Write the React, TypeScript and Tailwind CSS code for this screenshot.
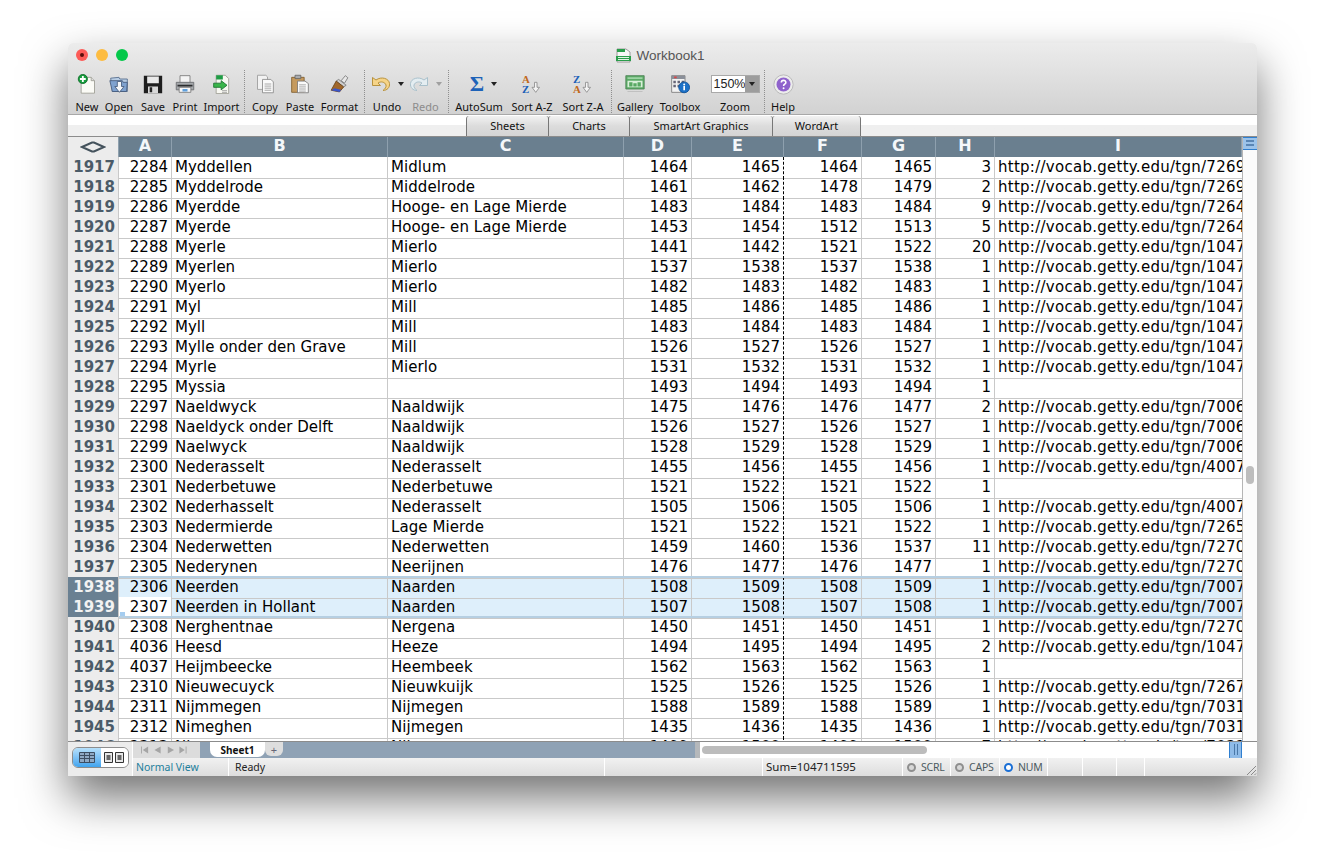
const ROWS = `1917|2284|Myddellen|Midlum|1464|1465|1464|1465|3|7269
1918|2285|Myddelrode|Middelrode|1461|1462|1478|1479|2|7269
1919|2286|Myerdde|Hooge- en Lage Mierde|1483|1484|1483|1484|9|7264
1920|2287|Myerde|Hooge- en Lage Mierde|1453|1454|1512|1513|5|7264
1921|2288|Myerle|Mierlo|1441|1442|1521|1522|20|1047
1922|2289|Myerlen|Mierlo|1537|1538|1537|1538|1|1047
1923|2290|Myerlo|Mierlo|1482|1483|1482|1483|1|1047
1924|2291|Myl|Mill|1485|1486|1485|1486|1|1047
1925|2292|Myll|Mill|1483|1484|1483|1484|1|1047
1926|2293|Mylle onder den Grave|Mill|1526|1527|1526|1527|1|1047
1927|2294|Myrle|Mierlo|1531|1532|1531|1532|1|1047
1928|2295|Myssia||1493|1494|1493|1494|1|
1929|2297|Naeldwyck|Naaldwijk|1475|1476|1476|1477|2|7006
1930|2298|Naeldyck onder Delft|Naaldwijk|1526|1527|1526|1527|1|7006
1931|2299|Naelwyck|Naaldwijk|1528|1529|1528|1529|1|7006
1932|2300|Nederasselt|Nederasselt|1455|1456|1455|1456|1|4007
1933|2301|Nederbetuwe|Nederbetuwe|1521|1522|1521|1522|1|
1934|2302|Nederhasselt|Nederasselt|1505|1506|1505|1506|1|4007
1935|2303|Nedermierde|Lage Mierde|1521|1522|1521|1522|1|7265
1936|2304|Nederwetten|Nederwetten|1459|1460|1536|1537|11|7270
1937|2305|Nederynen|Neerijnen|1476|1477|1476|1477|1|7270
1938|2306|Neerden|Naarden|1508|1509|1508|1509|1|7007
1939|2307|Neerden in Hollant|Naarden|1507|1508|1507|1508|1|7007
1940|2308|Nerghentnae|Nergena|1450|1451|1450|1451|1|7270
1941|4036|Heesd|Heeze|1494|1495|1494|1495|2|1047
1942|4037|Heijmbeecke|Heembeek|1562|1563|1562|1563|1|
1943|2310|Nieuwecuyck|Nieuwkuijk|1525|1526|1525|1526|1|7267
1944|2311|Nijmmegen|Nijmegen|1588|1589|1588|1589|1|7031
1945|2312|Nimeghen|Nijmegen|1435|1436|1435|1436|1|7031
1946|2313|Nimmegen|Nijmegen|1499|1500|1499|1500|7|7031`
  .split("\n")
  .map((r) => r.split("|"));

const GRID = "grid grid-cols-[51px_53px_216px_236px_68px_92px_78px_74px_59px_247px]";

function Row({ cells }: { cells: string[] }) {
  const [num, id, name, place, d, e, f, g, h, tgn] = cells;
  const selected = num === "1938" || num === "1939";
  const active = num === "1939";
  const rowBg = selected ? "bg-[#deeffb]" : "bg-white";
  const numCls = "overflow-hidden border-r border-b border-[#c9c9c9] pr-[3px] text-right";
  return (
    <div className={`${GRID} h-[20px] leading-[21px] text-[15px] text-black ${rowBg}`}>
      <div
        className={
          selected
            ? "border-r border-b border-[#c9c9c9] bg-[#6a8092] pr-[3px] text-right font-bold text-[#f2f2f2]"
            : "border-r border-b border-[#c9c9c9] bg-[#ececec] pr-[3px] text-right font-bold text-[#4b5b68]"
        }
      >
        {num}
      </div>
      <div className={`${numCls} ${active ? "bg-white" : ""}`}>{id}</div>
      <div className="overflow-hidden whitespace-nowrap border-r border-b border-[#c9c9c9] pl-[3px]">{name}</div>
      <div className="overflow-hidden whitespace-nowrap border-r border-b border-[#c9c9c9] pl-[3px] tracking-[0.08px]">{place}</div>
      <div className={numCls}>{d}</div>
      <div className="overflow-hidden border-r border-b border-b-[#c9c9c9] border-r-black pr-[3px] text-right [border-right-style:dashed]">{e}</div>
      <div className={numCls}>{f}</div>
      <div className={numCls}>{g}</div>
      <div className={numCls}>{h}</div>
      <div className="overflow-hidden whitespace-nowrap border-b border-[#c9c9c9] pl-[3px] tracking-[0.27px]">
        {tgn ? `http://vocab.getty.edu/tgn/${tgn}000` : ""}
      </div>
    </div>
  );
}

function NewIcon() {
  return (
    <svg width="20" height="20" viewBox="0 0 24 24">
      <path d="M5 4h12l4 4v15H5z" fill="#fbfbf6" stroke="#9a9a90" />
      <path d="M17 4v4h4" fill="#ddd" stroke="#9a9a90" />
      <circle cx="7" cy="6" r="5.500" fill="#169c3c" stroke="#0c6a28" />
      <path d="M7 2.500v7M3.500 6h7" stroke="#fff" strokeWidth="2.200" />
    </svg>
  );
}
function OpenIcon() {
  return (
    <svg width="20" height="20" viewBox="0 0 24 24">
      <path d="M2 5l10-1 1 2h9v15H4z" fill="#b8cde4" stroke="#50698a" />
      <path d="M1 8h15l1 2h5l-1 11H4z" fill="#7fa2cf" stroke="#44597a" />
      <path d="M10 9h5v6h3l-5.500 7-5.500-7h3z" fill="#f4f6f8" stroke="#44597a" />
    </svg>
  );
}
function SaveIcon() {
  return (
    <svg width="20" height="20" viewBox="0 0 24 24">
      <path d="M1 2h22v21H1z" fill="#1e1e1e" />
      <path d="M5 3h14v8H5z" fill="#e9e9e9" />
      <path d="M6 15h12v8H6z" fill="#d8d8d8" />
      <path d="M8 16h3v6H8z" fill="#222" />
    </svg>
  );
}
function PrintIcon() {
  return (
    <svg width="20" height="20" viewBox="0 0 24 24">
      <path d="M6 2h12v10H6z" fill="#f4f4f4" stroke="#777" />
      <path d="M1.500 10h21v9h-21z" fill="#a6a9ac" stroke="#66696c" />
      <path d="M3 13h18v2H3z" fill="#2b2d2f" />
      <path d="M5 16h14v6H5z" fill="#f7f7f7" stroke="#777" />
      <path d="M9 18h6v3H9z" fill="#5fa0dd" />
    </svg>
  );
}
function ImportIcon() {
  return (
    <svg width="20" height="20" viewBox="0 0 24 24">
      <path d="M5 1.500h11l4 4v18H5z" fill="#f8f8f2" stroke="#9a9a90" />
      <path d="M5 1.500h8v5H5z" fill="#1f9c45" />
      <path d="M2 11h9V8l7 5.500-7 5.500v-3H2z" fill="#3ab54a" stroke="#17702c" />
      <path d="M12 20h6M12 22h6" stroke="#999" />
    </svg>
  );
}
function CopyIcon() {
  return (
    <svg width="20" height="20" viewBox="0 0 24 24">
      <path d="M3 1.500h10l2 2v15H3z" fill="#f2f2f2" stroke="#999" />
      <path d="M9 6.500h10l3 3v13H9z" fill="#fafafa" stroke="#888" />
      <path d="M11.500 12h8M11.500 14.500h8M11.500 17h8M11.500 19.500h8" stroke="#999" />
    </svg>
  );
}
function PasteIcon() {
  return (
    <svg width="20" height="20" viewBox="0 0 24 24">
      <path d="M2 4h15v18H2z" fill="#c59a5e" stroke="#7d5a2a" />
      <path d="M6 1.500h7v4H6z" fill="#a9abae" stroke="#666" />
      <path d="M9 8.500h9l4 3v11H9z" fill="#fafafa" stroke="#777" />
      <path d="M11 13h8M11 15.500h8M11 18h8M11 20.500h8" stroke="#999" />
    </svg>
  );
}
function FormatIcon() {
  return (
    <svg width="21" height="20" viewBox="0 0 24 24">
      <path d="M14 8l5-6 3 2.500-4 6.500z" fill="#e8e8e8" stroke="#777" />
      <path d="M11 6.500l9 7-3 2-9-7z" fill="#cfcfcf" stroke="#777" />
      <path d="M8 8.500l9 7-5 6-10-2z" fill="#a0672b" stroke="#6a4218" />
      <path d="M2 19.500l10 2 2-2.500-8-2z" fill="#3a55c8" />
    </svg>
  );
}
function UndoIcon({ redo }: { redo?: boolean }) {
  const body = redo ? "#e4edf1" : "#f6d488";
  const line = redo ? "#a9c0cb" : "#b8933f";
  return (
    <svg width="20" height="16" viewBox="0 0 20 16" className={redo ? "-scale-x-100" : ""}>
      <path d="M1.500 1.500v8h8L7 7c3-2 7-1 8 2 .5 2-1 4-3 5.500 4 0 7-3 6.500-7C18 2.500 10.500 0 5 4z" fill={body} stroke={line} />
    </svg>
  );
}
function GalleryIcon() {
  return (
    <svg width="20" height="20" viewBox="0 0 24 24">
      <path d="M1 2h22v16H1z" fill="#5cab67" stroke="#4b8053" />
      <path d="M3 8h18v8H3z" fill="#d9efd9" />
      <path d="M5 10h4v5H5zM10 11h4v4h-4zM15 10h4v5h-4z" fill="#58a863" />
      <path d="M3 4h18v2H3z" fill="#9dd4a4" />
      <path d="M3 21h18" stroke="#bbb" />
    </svg>
  );
}
function ToolboxIcon() {
  return (
    <svg width="20" height="20" viewBox="0 0 24 24">
      <path d="M2 2h16v20H2z" fill="#f2f2f2" stroke="#777" />
      <path d="M2 2h16v4H2z" fill="#8a8f99" />
      <path d="M4 8h3v3H4zM9 8h3v3H9zM14 8h3v3h-3zM4 13h3v3H4zM9 13h3v3H9z" fill="#667" />
      <path d="M5 3h3v2H5z" fill="#d44" />
      <circle cx="17" cy="16" r="6.500" fill="#1d71c7" stroke="#0f4f96" />
      <path d="M17 14.500v5" stroke="#fff" strokeWidth="2" />
      <circle cx="17" cy="12.500" r="1.200" fill="#fff" />
    </svg>
  );
}
function HelpIcon() {
  return (
    <svg width="21" height="21" viewBox="0 0 24 24">
      <circle cx="12" cy="12" r="11" fill="#ececec" stroke="#b5b5b5" />
      <circle cx="12" cy="12" r="8" fill="#8f62cc" />
      <path d="M9.500 9.800c0-3.300 5.200-3.300 5.200-.2 0 2.100-2.600 2-2.600 4" fill="none" stroke="#fff" strokeWidth="1.800" />
      <circle cx="12.100" cy="16.300" r="1.100" fill="#fff" />
    </svg>
  );
}
function XlsxIcon() {
  return (
    <svg width="15" height="16" viewBox="0 0 15 16">
      <path d="M1 1h9l4 3v10H1z" fill="#f6f6f6" stroke="#9a9a9a" />
      <path d="M1 1h8v3H1z" fill="#2a9d4b" />
      <path d="M0 8h15v5H0z" fill="#2a9d4b" />
      <path d="M2 9.500h11M2 11.500h11" stroke="#dff3e3" />
    </svg>
  );
}
function SortIcon({ first, second }: { first: string; second: string }) {
  const col = (c: string) => (c === "A" ? "#c0691c" : "#1d5fb8");
  return (
    <svg width="22" height="20" viewBox="0 0 26 24">
      <text x="1" y="11" fontSize="13" fontWeight="700" fontFamily="Liberation Serif" fill={col(first)}>{first}</text>
      <text x="1" y="23" fontSize="13" fontWeight="700" fontFamily="Liberation Serif" fill={col(second)}>{second}</text>
      <path d="M16 10h3v6h3l-4.500 6-4.500-6h3z" fill="#f4f4f4" stroke="#8a8a8a" />
    </svg>
  );
}
function Caret({ faded }: { faded?: boolean }) {
  return (
    <svg width="6" height="4" viewBox="0 0 6 4" className="shrink-0">
      <path d="M0 0h6L3 4z" fill={faded ? "#a0a0a0" : "#222"} />
    </svg>
  );
}

function Tool({ w, label, faded, children }: { w: string; label: string; faded?: boolean; children: React.ReactNode }) {
  return (
    <div className={`flex ${w} shrink-0 flex-col items-center`}>
      <div className="flex h-[26px] items-center justify-center gap-[7px]">{children}</div>
      <div className={`mt-[3px] whitespace-nowrap text-[11px] leading-[14px] ${faded ? "text-[#8c8c8c]" : "text-[#111]"}`}>{label}</div>
    </div>
  );
}
function Sep() {
  return <div className="-mt-px h-[43px] w-px shrink-0 border-l border-dotted border-[#8f8f8f]" />;
}

function Tab({ w, label }: { w: string; label: string }) {
  return (
    <div className={`${w} flex h-[20px] items-center justify-center rounded-t-[3px] border-r border-l border-[#777] bg-gradient-to-b from-[#f2f2f2] via-[#dcdcdc] to-[#d4d4d4] pt-px text-[11px] text-[#111] -ml-px first:ml-0`}>
      {label}
    </div>
  );
}

function Led({ label, on, w }: { label: string; on?: boolean; w: string }) {
  return (
    <div className={`flex ${w} items-center gap-[5px] border-r border-white pl-[4px]`}>
      <span className={`h-[9px] w-[9px] rounded-full border-[2.500px] ${on ? "border-[#1a6fd6] bg-white" : "border-[#8f8f8f] bg-[#d8d8d8]"}`} />
      <span className="text-[10.500px] tracking-[-0.2px] text-[#4c5a60]">{label}</span>
    </div>
  );
}

function Grip() {
  return (
    <svg width="12" height="12" viewBox="0 0 12 12" className="absolute right-0 bottom-0">
      <path d="M11 2L2 11M11 6L6 11M11 9.500L9.500 11" stroke="#8a8a8a" />
    </svg>
  );
}

export default function App() {
  return (
    <div className="h-[868px] w-[1325px] overflow-hidden bg-white pt-[43px] pl-[68px] font-['DejaVu_Sans',sans-serif]">
      <div className="flex h-[733px] w-[1189px] flex-col overflow-hidden rounded-t-[5px] bg-white shadow-[0_22px_45px_rgba(0,0,0,0.55)]">
        {/* title + toolbar */}
        <div className="relative h-[72px] shrink-0 border-b border-[#a8a8a8] bg-gradient-to-b from-[#ececec] to-[#d2d2d2]">
          <div className="absolute top-[6px] left-[8px] flex gap-[8px]">
            <span className="flex h-[12px] w-[12px] items-center justify-center rounded-full bg-[#fc5b57]">
              <span className="h-[4px] w-[4px] rounded-full bg-[#5a0d0a]" />
            </span>
            <span className="h-[12px] w-[12px] rounded-full bg-[#fdbc40]" />
            <span className="h-[12px] w-[12px] rounded-full bg-[#05c84a]" />
          </div>
          <div className="flex h-[22px] items-center justify-center gap-[5px] pt-[4px] pr-[4px] font-['Liberation_Sans',sans-serif] text-[13.500px] text-[#555]">
            <XlsxIcon />
            <span>Workbook1</span>
          </div>
          <div className="flex pt-[6px] pl-[3px] font-['Noto_Sans',sans-serif]">
            <Tool w="w-[32px]" label="New"><NewIcon /></Tool>
            <Tool w="w-[32px]" label="Open"><OpenIcon /></Tool>
            <Tool w="w-[36px]" label="Save"><SaveIcon /></Tool>
            <Tool w="w-[28px]" label="Print"><PrintIcon /></Tool>
            <Tool w="w-[45px]" label="Import"><ImportIcon /></Tool>
            <Sep />
            <Tool w="w-[40px]" label="Copy"><CopyIcon /></Tool>
            <Tool w="w-[30px]" label="Paste"><PasteIcon /></Tool>
            <Tool w="w-[49px]" label="Format"><FormatIcon /></Tool>
            <Sep />
            <Tool w="w-[44px]" label="Undo"><UndoIcon /><Caret /></Tool>
            <Tool w="w-[33px]" label="Redo" faded><UndoIcon redo /><Caret faded /></Tool>
            <div className="w-[6px] shrink-0" />
            <Sep />
            <Tool w="w-[60px]" label="AutoSum">
              <span className="ml-[9px] font-['Liberation_Serif',serif] text-[22px] font-bold leading-none text-[#1d62b8]">Σ</span>
              <Caret />
            </Tool>
            <Tool w="w-[46px]" label="Sort A-Z"><SortIcon first="A" second="Z" /></Tool>
            <Tool w="w-[56px]" label="Sort Z-A"><SortIcon first="Z" second="A" /></Tool>
            <Sep />
            <Tool w="w-[46px]" label="Gallery"><GalleryIcon /></Tool>
            <Tool w="w-[44px]" label="Toolbox"><ToolboxIcon /></Tool>
            <div className="w-[4px] shrink-0" />
            <Tool w="w-[58px]" label="Zoom">
              <div className="flex h-[18px] w-[49px] items-center border border-[#a9a9a9] bg-white">
                <span className="w-[33px] pl-[2px] font-['Liberation_Sans',sans-serif] text-[12.500px] leading-none text-[#222]">150%</span>
                <span className="flex h-full flex-1 items-center justify-center bg-[#9d9d9d]"><Caret /></span>
              </div>
            </Tool>
            <Sep />
            <Tool w="w-[36px]" label="Help"><HelpIcon /></Tool>
          </div>
        </div>

        {/* elements gallery strip */}
        <div className="flex h-[21px] shrink-0 items-end bg-gradient-to-b from-white from-50% to-[#efefef] to-50% pl-[398px] font-['Noto_Sans',sans-serif]">
          <Tab w="w-[83px]" label="Sheets" />
          <Tab w="w-[82px]" label="Charts" />
          <Tab w="w-[144px]" label="SmartArt Graphics" />
          <Tab w="w-[89px]" label="WordArt" />
        </div>

        {/* sheet */}
        <div className="relative flex min-h-0 flex-1 border-t border-[#8c8c8c]">
          <div className="flex w-[1174px] shrink-0 flex-col">
            <div className={`${GRID} h-[20px] shrink-0 bg-[#6a7f8f] text-center text-[16px] font-bold leading-[18px] text-[#f4f7fa]`}>
              <div className="flex items-center justify-center border-r border-[#8ea0ae] bg-[#ececec]">
                <svg width="26" height="12" viewBox="0 0 26 12"><path d="M2 6l10-4.500h2L24 6 14 10.500h-2z" fill="none" stroke="#44525c" strokeWidth="2" /></svg>
              </div>
              {"ABCDEFGHI".split("").map((c) => (
                <div key={c} className="border-r border-[#8ea0ae]">{c}</div>
              ))}
            </div>
            <div className="relative min-h-0 flex-1 overflow-hidden">
              {ROWS.map((r) => (
                <Row key={r[0]} cells={r} />
              ))}
              <div className="pointer-events-none absolute top-[419px] right-0 left-[51px] h-[2px] bg-[#b6cfe2]" />
              <div className="pointer-events-none absolute top-[459px] right-0 left-[51px] h-[2px] bg-[#b6cfe2]" />
              <div className="absolute top-[455px] left-[52px] h-[4px] w-[5px] bg-[#a5cdf0]" />
            </div>
          </div>
          <div className="relative flex-1 border-l border-[#b5b5b5] bg-[#fbfbfb]">
            <div className="h-[13px] border-y border-[#2f7fd0] bg-[#9cc3ea]">
              <div className="mx-[3px] mt-[2px] h-[2px] border-y border-[#5a86b5]" />
              <div className="mx-[3px] mt-[2px] h-[2px] border-y border-[#5a86b5]" />
            </div>
            <div className="absolute top-[329px] left-[3px] h-[18px] w-[8px] rounded-full bg-[#bdbdbd]" />
          </div>
        </div>

        {/* sheet tabs + status */}
        <div className="relative flex h-[35px] shrink-0 border-t border-[#8c8c8c] font-['Noto_Sans',sans-serif]">
          <div className="flex w-[65px] shrink-0 items-start border-r border-[#fff] bg-[#ececec] pt-[5px] pl-[4px]">
            <div className="flex h-[21px] w-[57px] overflow-hidden rounded-[6px] border border-[#8c8c8c]">
              <div className="flex flex-1 items-center justify-center bg-gradient-to-b from-[#b5e0fb] to-[#3fa4ee]">
                <svg width="16" height="11" viewBox="0 0 16 11"><path d="M.5.500h15v10H.5zM.5 3.500h15M.5 6.500h15M5.500.500v10M10.500.500v10" fill="#8fa9c4" stroke="#3d4e62" /></svg>
              </div>
              <div className="flex flex-1 items-center justify-center bg-white">
                <svg width="20" height="11" viewBox="0 0 20 11"><path d="M.5.500h8v10h-8zM11.500.500h8v10h-8z" fill="#e8e8e8" stroke="#333" /><path d="M2.500 3h4v5h-4zM13.500 3h4v5h-4z" fill="#666" /></svg>
              </div>
            </div>
          </div>
          <div className="flex min-w-0 flex-1 flex-col">
            <div className="flex h-[16px] shrink-0 items-start bg-[#8fa2b5]">
              <div className="flex h-full w-[67px] shrink-0 items-center bg-[#dcdcdc] pl-[8px]">
                <svg width="50" height="8" viewBox="0 0 56 8" fill="#a5a5a5"><path d="M0 0h1v8H0zM8 0v8L2 4zM22 0v8l-7-4zM30 0l7 4-7 4zM43 0l6 4-6 4zM50 0h1v8h-1z" /></svg>
              </div>
              <div className="ml-[10px] flex h-[15px] w-[55px] items-center justify-center rounded-b-[7px] bg-white text-[10px] font-bold leading-none text-[#111]">Sheet1</div>
              <div className="flex h-[14px] w-[18px] items-center justify-center rounded-b-[6px] bg-[#dedede] text-[11px] leading-none text-[#667]">+</div>
              <div className="flex-1" />
              <div className="h-full w-[5px] bg-[#b5b8bb]" />
              <div className="flex h-full w-[529px] items-center bg-white pl-[2px]">
                <div className="h-[8px] w-[225px] rounded-full bg-[#bcbcbc]" />
              </div>
              <div className="flex h-full w-[13px] justify-center gap-[2px] border-x border-[#2f7fd0] bg-[#8fbbe8] pt-[2px]">
                <div className="h-[11px] w-px bg-[#4a78a8]" />
                <div className="h-[11px] w-px bg-[#4a78a8]" />
              </div>
              <div className="h-full w-[15px] bg-white" />
            </div>
            <div className="flex h-[18px] flex-1 bg-gradient-to-b from-[#f1f1f1] to-[#dddddd] text-[10.500px] leading-[18px]">
              <div className="w-[96px] border-r border-white pl-[3px] text-[#1e7f9c]">Normal View</div>
              <div className="w-[376px] border-r border-white pl-[6px] text-[#222]">Ready</div>
              <div className="w-[158px] border-r border-white" />
              <div className="w-[140px] border-r border-white pl-[3px] text-[11.500px] text-[#222]">Sum=104711595</div>
              <Led w="w-[48px]" label="SCRL" />
              <Led w="w-[49px]" label="CAPS" />
              <Led w="w-[48px]" label="NUM" on />
              <div className="w-[35px] border-r border-white" />
              <div className="w-[34px] border-r border-white" />
              <div className="w-[28px] border-r border-white" />
              <div className="relative flex-1"><Grip /></div>
            </div>
          </div>
        </div>
      </div>
    </div>
  );
}
